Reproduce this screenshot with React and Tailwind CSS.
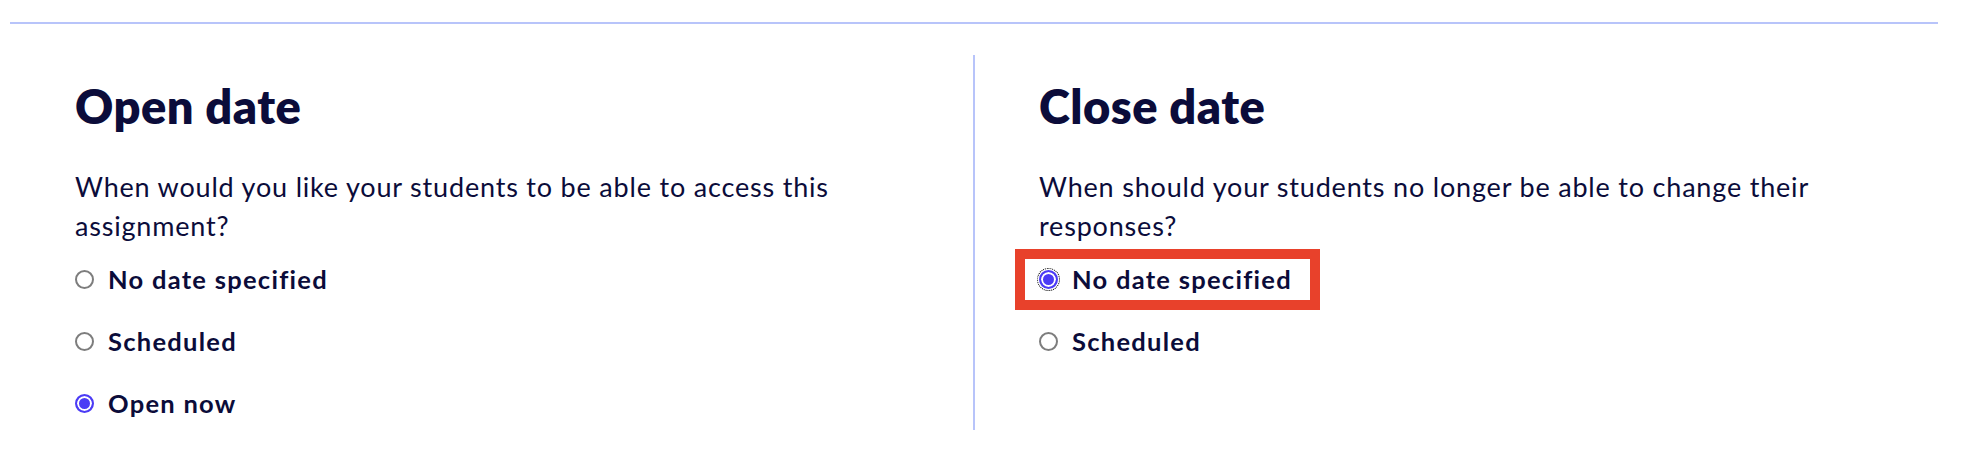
import { useState } from 'react';

const font = { fontFamily: 'Lato, "Noto Sans", sans-serif' };

function RadioRow({ name, value, label, checked, onChange, focused }) {
  return (
    <label className="relative inline-flex h-[36px] items-center gap-[14px] self-start cursor-pointer">
      <input
        type="radio"
        name={name}
        value={value}
        checked={checked}
        onChange={onChange}
        className={
          'm-0 h-[19px] w-[19px] shrink-0 appearance-none rounded-full border-2 border-[#7d7d7d] bg-white ' +
          'checked:border-[#4b3bf5] checked:bg-[#4b3bf5] checked:shadow-[inset_0_0_0_2px_#fff] ' +
          (focused ? 'outline-1 outline-dotted outline-black outline-offset-[1px]' : '')
        }
      />
      <span className="text-[25.5px] font-bold tracking-[0.05em] text-[#0b0c3a]">{label}</span>
      {/* red highlight box around the focused option */}
      {focused && (
        <span className="pointer-events-none absolute -top-[12px] -bottom-[13px] -left-[24px] -right-[28px] border-[10px] border-[#e8412b]" />
      )}
    </label>
  );
}

function DateColumn({ title, question, name, options, value, setValue, focusedValue, className }) {
  return (
    <div className={'flex flex-col pt-[26px] pb-[9px] ' + className}>
      <h2 className="text-[47px] leading-[50px] font-extrabold tracking-[0.01em] text-[#0b0c3a]">{title}</h2>
      <p className="mt-[36px] w-[830px] text-[27px] leading-[39px] tracking-[0.03em] text-[#0b0c3a]">{question}</p>
      <div className="mt-[16px] flex flex-col gap-[26px]">
        {options.map((o) => (
          <RadioRow
            key={o.value}
            name={name}
            value={o.value}
            label={o.label}
            checked={value === o.value}
            onChange={() => setValue(o.value)}
            focused={focusedValue === o.value}
          />
        ))}
      </div>
    </div>
  );
}

export default function App() {
  const [openDate, setOpenDate] = useState('now');
  const [closeDate, setCloseDate] = useState('none');

  return (
    <div className="min-h-[476px] bg-white pl-[10px] pr-[30px] pt-[22px]" style={font}>
      <div className="border-t-2 border-[#b8c4fa]">
        <div className="mt-[31px] grid grid-cols-[963px_1fr]">
          <DateColumn
            className="pl-[65px]"
            title="Open date"
            question="When would you like your students to be able to access this assignment?"
            name="open"
            options={[
              { value: 'none', label: 'No date specified' },
              { value: 'scheduled', label: 'Scheduled' },
              { value: 'now', label: 'Open now' },
            ]}
            value={openDate}
            setValue={setOpenDate}
          />
          <DateColumn
            className="border-l-2 border-[#b8c4fa] pl-[64px]"
            title="Close date"
            question="When should your students no longer be able to change their responses?"
            name="close"
            options={[
              { value: 'none', label: 'No date specified' },
              { value: 'scheduled', label: 'Scheduled' },
            ]}
            value={closeDate}
            setValue={setCloseDate}
            focusedValue="none"
          />
        </div>
      </div>
    </div>
  );
}
